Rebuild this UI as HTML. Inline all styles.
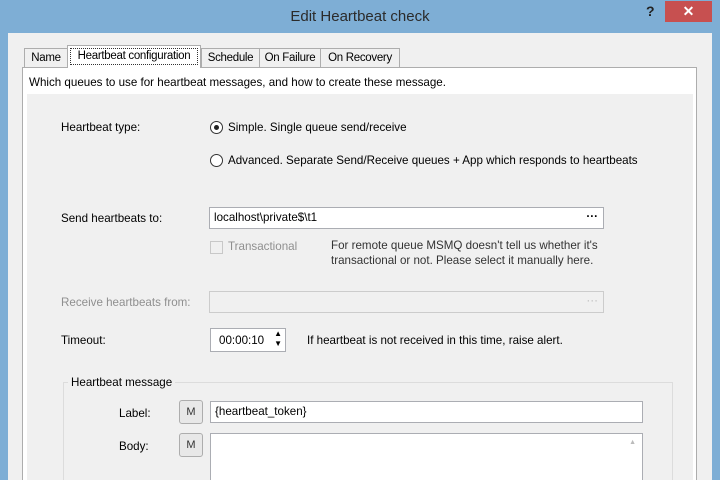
<!DOCTYPE html>
<html><head><style>
*{box-sizing:border-box;margin:0;padding:0}
html,body{width:720px;height:480px;overflow:hidden}
body{background:#7eaed5;font-family:"Liberation Sans",sans-serif;font-size:11.6px;color:#000;position:relative;white-space:nowrap}
.a{position:absolute}
.title{left:0;top:8px;width:720px;text-align:center;font-size:15px;color:#2b2b2b}
.client{left:8px;top:33px;width:704px;height:447px;background:#f0f0f0;overflow:hidden}
.tab{background:#f0f0f0;border:1px solid #adadad;border-bottom:none;height:20px;top:48px;padding:3px 0 0;text-align:center;font-size:11.5px;letter-spacing:-0.3px}
.panel{left:22px;top:67px;width:675px;height:420px;border:1px solid #adadad;background:#fff}
.inner{left:27px;top:94px;width:666px;height:390px;background:#f0f0f0}
.inp{background:#fff;border:1px solid #abadb3;height:22px;padding:3px 4px}
.gray{color:#8f8f8f}
.radio{width:13px;height:13px;border-radius:50%;border:1px solid #333;background:#fff}
.m{width:24px;height:24px;border:1px solid #adadad;border-radius:3px;background:#e8e8e8;text-align:center;line-height:22px;font-size:11px;color:#333}
</style></head><body>
<div class="a title">Edit Heartbeat check</div>
<div class="a" style="left:646px;top:3px;font-size:14px;font-weight:bold;color:#222">?</div>
<div class="a" style="left:665px;top:1px;width:47px;height:21px;background:#c75050;color:#fff;text-align:center;font-size:14px;font-weight:bold;line-height:21px">✕</div>
<div class="a client"></div>
<div class="a tab" style="left:24px;width:44px">Name</div>
<div class="a tab" style="left:259px;width:62px">On Failure</div>
<div class="a tab" style="left:201px;width:59px">Schedule</div>
<div class="a tab" style="left:320px;width:80px">On Recovery</div>
<div class="a panel"></div>
<div class="a" style="left:67px;top:45px;width:134px;height:23px;background:#fff;border:1px solid #adadad;border-bottom:none"></div>
<div class="a" style="left:70px;top:48px;width:128px;height:17px;border:1px dotted #333;padding:1px 0;text-align:center;font-size:11.5px;letter-spacing:-0.3px">Heartbeat configuration</div>
<div class="a" style="left:29px;top:76px">Which queues to use for heartbeat messages, and how to create these message.</div>
<div class="a inner"></div>
<div class="a" style="left:61px;top:121px">Heartbeat type:</div>
<div class="a radio" style="left:210px;top:121px"><div class="a" style="left:3px;top:3px;width:5px;height:5px;border-radius:50%;background:#222"></div></div>
<div class="a" style="left:228px;top:121px">Simple. Single queue send/receive</div>
<div class="a radio" style="left:210px;top:154px"></div>
<div class="a" style="left:228px;top:154px">Advanced. Separate Send/Receive queues + App which responds to heartbeats</div>
<div class="a" style="left:61px;top:212px">Send heartbeats to:</div>
<div class="a inp" style="left:209px;top:207px;width:395px">localhost\private$\t1<span style="position:absolute;right:5px;top:2px;font-weight:bold">···</span></div>
<div class="a" style="left:210px;top:241px;width:13px;height:13px;border:1px solid #c8c8c8;background:#f0f0f0"></div>
<div class="a gray" style="left:228px;top:240px">Transactional</div>
<div class="a" style="left:331px;top:238px;color:#333;line-height:15px">For remote queue MSMQ doesn't tell us whether it's<br>transactional or not. Please select it manually here.</div>
<div class="a gray" style="left:61px;top:296px">Receive heartbeats from:</div>
<div class="a inp" style="left:209px;top:291px;width:395px;background:#f0f0f0;border-color:#ccc"><span style="position:absolute;right:5px;top:2px;color:#bbb">···</span></div>
<div class="a" style="left:61px;top:334px">Timeout:</div>
<div class="a inp" style="left:210px;top:328px;width:76px;height:24px;padding:5px 8px">00:00:10<span style="position:absolute;right:3px;top:0px;font-size:8px;line-height:10px">▲<br>▼</span></div>
<div class="a" style="left:307px;top:334px">If heartbeat is not received in this time, raise alert.</div>
<div class="a" style="left:63px;top:382px;width:610px;height:110px;border:1px solid #dcdcdc"></div>
<div class="a" style="left:68px;top:376px;background:#f0f0f0;padding:0 3px">Heartbeat message</div>
<div class="a" style="left:119px;top:407px">Label:</div>
<div class="a m" style="left:179px;top:400px">M</div>
<div class="a inp" style="left:210px;top:401px;width:433px">{heartbeat_token}</div>
<div class="a" style="left:119px;top:440px">Body:</div>
<div class="a m" style="left:179px;top:433px">M</div>
<div class="a inp" style="left:210px;top:433px;width:433px;height:60px"><span style="position:absolute;right:6px;top:5px;font-size:7px;color:#bbb">▲</span></div>
</body></html>
